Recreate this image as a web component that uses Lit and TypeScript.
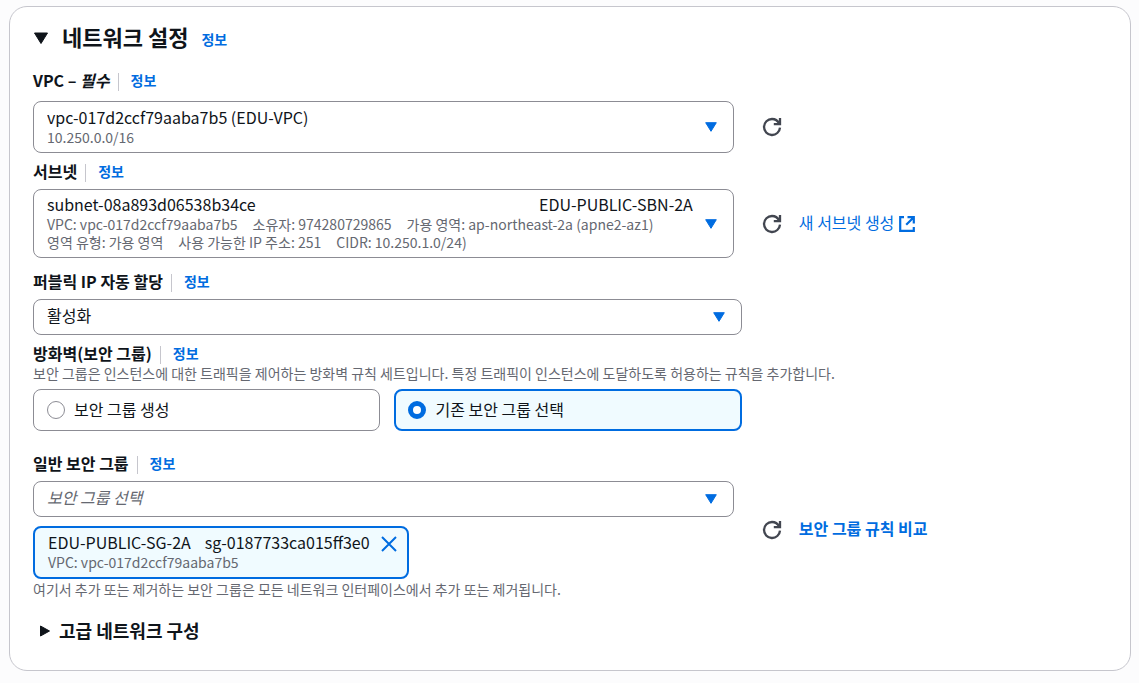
import { LitElement, html, css } from "lit";
import { customElement, state } from "lit/decorators.js";
import { classMap } from "lit/directives/class-map.js";

const caret = html`<svg class="caret" viewBox="0 0 12 10" aria-hidden="true">
  <path d="M.7.7h10.6L6 9.3z" fill="currentColor" stroke="currentColor" stroke-linejoin="round" />
</svg>`;

const refreshIcon = html`<svg class="refresh-icon" viewBox="0 0 20 20" aria-hidden="true">
  <path
    d="M18 10.6A8 8 0 1 1 10 2c3.4 0 5.8 1.8 7.2 4.8M18 1v6.2h-6.2"
    fill="none"
    stroke="currentColor"
    stroke-width="2.3"
  />
</svg>`;

const externalIcon = html`<svg class="external-icon" viewBox="0 0 16 16" aria-hidden="true">
  <path d="M5 1.2H1.2v13.6h13.6V11M8.5 1.2h6.3v6.3M14.8 1.2L7.2 8.8" fill="none" stroke="currentColor" stroke-width="2.2" />
</svg>`;

/** Field heading with its divider and the info link. */
@customElement("info-heading")
export class InfoHeading extends LitElement {
  static styles = css`
    :host {
      display: flex;
      align-items: center;
      height: 20px;
    }
    .divider {
      width: 1px;
      height: 18px;
      margin: 3px 12px 0 8px;
      background: #c6c6cd;
    }
    .info {
      color: #006ce0;
      font-size: 14px;
      font-weight: 700;
      line-height: 20px;
      text-decoration: none;
    }
  `;

  render() {
    return html`<slot></slot><span class="divider"></span><a class="info" href="#info">정보</a>`;
  }
}

@customElement("app-root")
export class AppRoot extends LitElement {
  @state() private mode: "create" | "existing" = "existing";

  static styles = css`
    :host {
      display: block;
      box-sizing: border-box;
      min-height: 100vh;
      padding: 6px 8px 11px 9px;
      background: #fcfcfd;
      color: #0f141a;
      font: 400 16px/20px "Noto Sans CJK KR", sans-serif;
    }
    *,
    *::before,
    *::after {
      box-sizing: border-box;
    }
    .card {
      padding: 16px 23px 30px;
      border: 1px solid #c6c6cd;
      border-radius: 18px;
      background: #ffffff;
    }
    .header {
      display: flex;
      align-items: center;
      height: 26px;
    }
    .toggle {
      display: flex;
      align-items: center;
      padding: 0;
      border: 0;
      background: none;
      color: inherit;
      font: inherit;
      font-weight: 700;
      cursor: pointer;
    }
    .title,
    .subtitle {
      margin: 0;
      font-weight: 700;
    }
    .title {
      font-size: 22px;
      line-height: 26px;
    }
    .title .toggle {
      gap: 13px;
    }
    .toggle-icon {
      width: 16px;
      height: 14px;
      margin-top: 4px;
    }
    .header-info {
      margin: 6px 0 0 13px;
      color: #006ce0;
      font-size: 14px;
      font-weight: 700;
      text-decoration: none;
    }
    .field.vpc {
      margin-top: 21px;
    }
    .field.subnet,
    .field.firewall {
      margin-top: 8px;
    }
    .field.public-ip {
      margin-top: 13px;
    }
    .field.groups {
      margin-top: 22px;
    }
    .label {
      font-weight: 700;
    }
    .row {
      display: grid;
      grid-template-columns: calc(66% - 8px) auto;
      justify-content: start;
      align-items: center;
      column-gap: 28px;
      margin-top: 8px;
    }
    .vpc .row {
      margin-top: 11px;
    }
    .wide {
      width: 66%;
      margin-top: 8px;
    }
    .picker {
      display: grid;
      align-items: center;
    }
    .picker > * {
      grid-area: 1 / 1;
    }
    .select {
      width: 100%;
      margin: 0;
      padding: 5px 36px 9px 13px;
      border: 1px solid #8c8c94;
      border-radius: 8px;
      appearance: none;
      background: #ffffff;
      color: inherit;
      font: inherit;
      line-height: 20px;
      cursor: pointer;
    }
    .vpc .select {
      padding: 5px 36px 25px 13px;
    }
    .subnet .select {
      padding: 4px 36px 43px 13px;
    }
    .select.empty {
      color: #656871;
      font-style: italic;
    }
    .caret {
      width: 12px;
      height: 10px;
      margin-right: 17px;
      justify-self: end;
      color: #006ce0;
      pointer-events: none;
    }
    .details {
      align-self: end;
      padding: 0 14px 7px;
      color: #656871;
      font-size: 14px;
      line-height: 18px;
      pointer-events: none;
    }
    .detail-line {
      display: flex;
      gap: 15px;
    }
    .tag {
      align-self: start;
      justify-self: end;
      padding: 5px 41px 0 0;
      pointer-events: none;
    }
    .actions {
      display: flex;
      align-items: center;
      gap: 17px;
    }
    .icon-button {
      display: flex;
      padding: 0;
      border: 0;
      background: none;
      color: #424650;
      cursor: pointer;
    }
    .refresh-icon {
      width: 20px;
      height: 20px;
    }
    .external-icon {
      width: 16px;
      height: 16px;
    }
    .link {
      display: flex;
      align-items: center;
      gap: 5px;
      color: #006ce0;
      text-decoration: none;
    }
    .link-text {
      padding-bottom: 4px;
    }
    .link.strong {
      font-weight: 700;
    }
    .description {
      margin: 0;
      color: #656871;
      font-size: 14px;
    }
    .tiles {
      display: grid;
      grid-template-columns: 1fr 1fr;
      gap: 14px;
      width: 66%;
      margin-top: 6px;
    }
    .tile {
      display: flex;
      align-items: center;
      gap: 9px;
      height: 42px;
      padding: 0 13px;
      border: 1px solid #8c8c94;
      border-radius: 8px;
      cursor: pointer;
    }
    .tile.selected {
      padding: 0 12px;
      border: 2px solid #006ce0;
      background: #f0fbff;
    }
    .tile-text {
      padding-bottom: 3px;
    }
    .radio {
      width: 18px;
      height: 18px;
      margin: 0;
      border: 1px solid #8c8c94;
      border-radius: 50%;
      appearance: none;
      background: #ffffff;
    }
    .radio:checked {
      border: 5px solid #006ce0;
    }
    .token {
      display: inline-grid;
      grid-template-columns: auto auto;
      column-gap: 11px;
      margin-top: 9px;
      padding: 4px 10px 5px 13px;
      border: 2px solid #006ce0;
      border-radius: 8px;
      background: #f0fbff;
    }
    .token-title {
      display: flex;
      gap: 14px;
    }
    .token-note {
      color: #656871;
      font-size: 14px;
    }
    .close {
      align-self: start;
      margin-top: 4px;
      color: #006ce0;
    }
    .close-icon {
      width: 16px;
      height: 16px;
    }
    .subtitle {
      margin-top: 21px;
      font-size: 18px;
    }
    .subtitle .toggle {
      gap: 9px;
      padding-left: 6px;
    }
    .side-icon {
      width: 11px;
      height: 12px;
      margin-top: 2px;
    }
  `;

  private refresh(name: string) {
    return html`<button class="icon-button" type="button" aria-label=${name}>${refreshIcon}</button>`;
  }

  private tile(value: "create" | "existing", text: string) {
    const selected = this.mode === value;
    return html`<label class=${classMap({ tile: true, selected })}>
      <input
        class="radio"
        type="radio"
        name="firewall"
        .value=${value}
        .checked=${selected}
        @change=${() => (this.mode = value)}
      />
      <span class="tile-text">${text}</span>
    </label>`;
  }

  render() {
    return html`
      <section class="card">
        <header class="header">
          <h2 class="title">
            <button class="toggle" type="button" aria-expanded="true">
              <svg class="toggle-icon" viewBox="0 0 16 14" aria-hidden="true">
                <path d="M1.5 2h13L8 12.5z" fill="currentColor" stroke="currentColor" stroke-linejoin="round" />
              </svg>
              네트워크 설정
            </button>
          </h2>
          <a class="header-info" href="#info">정보</a>
        </header>

        <div class="field vpc">
          <info-heading><label class="label" for="vpc">VPC – <em>필수</em></label></info-heading>
          <div class="row">
            <div class="picker">
              <select class="select" id="vpc" aria-describedby="vpc-details">
                <option>vpc-017d2ccf79aaba7b5 (EDU-VPC)</option>
              </select>
              <div class="details" id="vpc-details">10.250.0.0/16</div>
              ${caret}
            </div>
            ${this.refresh("VPC")}
          </div>
        </div>

        <div class="field subnet">
          <info-heading><label class="label" for="subnet">서브넷</label></info-heading>
          <div class="row">
            <div class="picker">
              <select class="select" id="subnet" aria-describedby="subnet-details">
                <option>subnet-08a893d06538b34ce</option>
              </select>
              <span class="tag">EDU-PUBLIC-SBN-2A</span>
              <div class="details" id="subnet-details">
                <div class="detail-line">
                  <span>VPC: vpc-017d2ccf79aaba7b5</span>
                  <span>소유자: 974280729865</span>
                  <span>가용 영역: ap-northeast-2a (apne2-az1)</span>
                </div>
                <div class="detail-line">
                  <span>영역 유형: 가용 영역</span>
                  <span>사용 가능한 IP 주소: 251</span>
                  <span>CIDR: 10.250.1.0/24)</span>
                </div>
              </div>
              ${caret}
            </div>
            <div class="actions">
              ${this.refresh("서브넷")}
              <a class="link" href="#create-subnet"><span class="link-text">새 서브넷 생성</span>${externalIcon}</a>
            </div>
          </div>
        </div>

        <div class="field public-ip">
          <info-heading><label class="label" for="public-ip">퍼블릭 IP 자동 할당</label></info-heading>
          <div class="picker wide">
            <select class="select" id="public-ip">
              <option>활성화</option>
            </select>
            ${caret}
          </div>
        </div>

        <div class="field firewall" role="radiogroup" aria-labelledby="firewall-label">
          <info-heading><span class="label" id="firewall-label">방화벽(보안 그룹)</span></info-heading>
          <p class="description">
            보안 그룹은 인스턴스에 대한 트래픽을 제어하는 방화벽 규칙 세트입니다. 특정 트래픽이 인스턴스에 도달하도록 허용하는
            규칙을 추가합니다.
          </p>
          <div class="tiles">
            ${this.tile("create", "보안 그룹 생성")} ${this.tile("existing", "기존 보안 그룹 선택")}
          </div>
        </div>

        <div class="field groups">
          <info-heading><label class="label" for="groups">일반 보안 그룹</label></info-heading>
          <div class="row">
            <div>
              <div class="picker">
                <select class="select empty" id="groups">
                  <option>보안 그룹 선택</option>
                </select>
                ${caret}
              </div>
              <div class="token">
                <div>
                  <div class="token-title"><span>EDU-PUBLIC-SG-2A</span><span>sg-0187733ca015ff3e0</span></div>
                  <div class="token-note">VPC: vpc-017d2ccf79aaba7b5</div>
                </div>
                <button class="icon-button close" type="button" aria-label="EDU-PUBLIC-SG-2A">
                  <svg class="close-icon" viewBox="0 0 16 16" aria-hidden="true">
                    <path d="M1 1l14 14M15 1L1 15" fill="none" stroke="currentColor" stroke-width="2" />
                  </svg>
                </button>
              </div>
            </div>
            <div class="actions">
              ${this.refresh("보안 그룹")}
              <a class="link strong" href="#compare"><span class="link-text">보안 그룹 규칙 비교</span></a>
            </div>
          </div>
          <p class="description">여기서 추가 또는 제거하는 보안 그룹은 모든 네트워크 인터페이스에서 추가 또는 제거됩니다.</p>
        </div>

        <h3 class="subtitle">
          <button class="toggle" type="button" aria-expanded="false">
            <svg class="side-icon" viewBox="0 0 11 12" aria-hidden="true">
              <path d="M1.5 1v10l9-5z" fill="currentColor" stroke="currentColor" stroke-linejoin="round" />
            </svg>
            고급 네트워크 구성
          </button>
        </h3>
      </section>
    `;
  }
}
